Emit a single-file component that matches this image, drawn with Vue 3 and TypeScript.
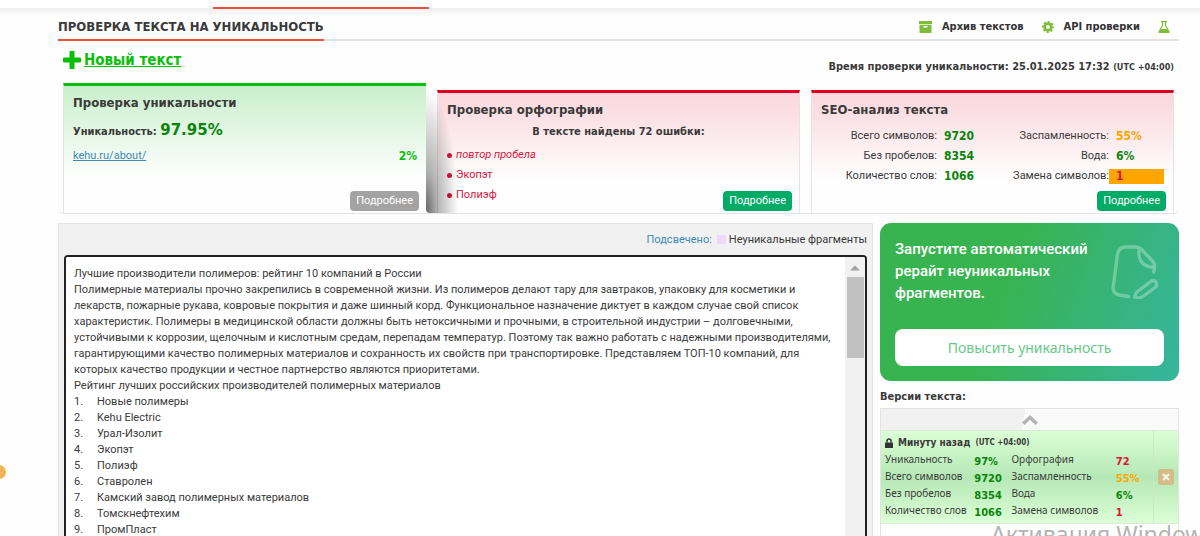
<script setup lang="ts">
import { ref } from 'vue'

interface Stat {
  label: string
  value: string
  tone: 'good' | 'warn' | 'bad'
  marked?: boolean
}

const seoLeft: Stat[] = [
  { label: 'Всего символов', value: '9720', tone: 'good' },
  { label: 'Без пробелов', value: '8354', tone: 'good' },
  { label: 'Количество слов', value: '1066', tone: 'good' },
]
const seoRight: Stat[] = [
  { label: 'Заспамленность', value: '55%', tone: 'warn' },
  { label: 'Вода', value: '6%', tone: 'good' },
  { label: 'Замена символов', value: '1', tone: 'bad', marked: true },
]

const versionRows: [Stat, Stat][] = [
  [
    { label: 'Уникальность', value: '97%', tone: 'good' },
    { label: 'Орфография', value: '72', tone: 'bad' },
  ],
  [seoLeft[0], seoRight[0]],
  [seoLeft[1], seoRight[1]],
  [seoLeft[2], seoRight[2]],
]

const intro = [
  'Лучшие производители полимеров: рейтинг 10 компаний в России',
  'Полимерные материалы прочно закрепились в современной жизни. Из полимеров делают тару для завтраков, упаковку для косметики и',
  'лекарств, пожарные рукава, ковровые покрытия и даже шинный корд. Функциональное назначение диктует в каждом случае свой список',
  'характеристик. Полимеры в медицинской области должны быть нетоксичными и прочными, в строительной индустрии – долговечными,',
  'устойчивыми к коррозии, щелочным и кислотным средам, перепадам температур. Поэтому так важно работать с надежными производителями,',
  'гарантирующими качество полимерных материалов и сохранность их свойств при транспортировке. Представляем ТОП-10 компаний, для',
  'которых качество продукции и честное партнерство являются приоритетами.',
  'Рейтинг лучших российских производителей полимерных материалов',
]
const companies = [
  'Новые полимеры',
  'Kehu Electric',
  'Урал-Изолит',
  'Экопэт',
  'Полиэф',
  'Ставролен',
  'Камский завод полимерных материалов',
  'Томскнефтехим',
  'ПромПласт',
]
const text = ref([...intro, ...companies.map((name, i) => `${i + 1}.\t${name}`)].join('\n'))
</script>

<template>
  <div class="page">
    <div class="top-strip"><span class="top-active"></span></div>

    <div class="container">
      <header class="title-row">
        <h1>ПРОВЕРКА ТЕКСТА НА УНИКАЛЬНОСТЬ</h1>
        <nav class="tools">
          <a href="#">
            <svg width="13" height="12" viewBox="0 0 13 12" fill="#7fbc3b">
              <path d="M0 0h13v3H0zM.5 3.800h12V12H.5zM4.500 5v1.500h4V5z" fill-rule="evenodd" />
            </svg>
            Архив текстов
          </a>
          <a href="#">
            <svg width="12" height="12" viewBox="0 0 12 12" fill="none">
              <circle cx="6" cy="6" r="3.300" stroke="#7fbc3b" stroke-width="2.800" />
              <circle cx="6" cy="6" r="5.100" stroke="#7fbc3b" stroke-width="1.800" stroke-dasharray="2.100 1.905" stroke-dashoffset="1" />
            </svg>
            API проверки
          </a>
          <a href="#" aria-label="Лаборатория">
            <svg width="12" height="12" viewBox="0 0 12 12" fill="none" stroke="#7fbc3b" stroke-width="1.200">
              <path d="M3 .6h6M4.500.6v4L1.100 10.400Q.7 11.400 1.700 11.400h8.600Q11.300 11.400 10.900 10.400L7.500 4.600v-4" />
              <path d="M2.700 8h6.600l1.700 3.400H1z" fill="#7fbc3b" stroke="none" />
            </svg>
          </a>
        </nav>
      </header>

      <div class="action-row">
        <a href="#" class="new-text">
          <svg width="18" height="18" viewBox="0 0 18 18" fill="#0abf0a">
            <path d="M7.500 0h3q1 0 1 1v5.500H17q1 0 1 1v3q0 1-1 1h-5.500V17q0 1-1 1h-3q-1 0-1-1v-5.500H1q-1 0-1-1v-3q0-1 1-1h5.500V1q0-1 1-1z" />
          </svg>
          <span>Новый текст</span>
        </a>
        <p class="check-time">Время проверки уникальности: 25.01.2025 17:32 <small>(UTC +04:00)</small></p>
      </div>

      <section class="cards">
        <article class="card card-green">
          <h2>Проверка уникальности</h2>
          <p class="unique">Уникальность: <strong>97.95%</strong></p>
          <p class="source"><a href="#">kehu.ru/about/</a><b>2%</b></p>
          <button type="button" class="more more-off">Подробнее</button>
        </article>

        <article class="card card-red">
          <h2>Проверка орфографии</h2>
          <p class="found">В тексте найдены 72 ошибки:</p>
          <ul>
            <li><em>повтор пробела</em></li>
            <li>Экопэт</li>
            <li>Полиэф</li>
          </ul>
          <button type="button" class="more">Подробнее</button>
        </article>

        <article class="card card-red">
          <h2>SEO-анализ текста</h2>
          <div class="seo">
            <dl v-for="(col, i) in [seoLeft, seoRight]" :key="i">
              <template v-for="s in col" :key="s.label">
                <dt>{{ s.label }}:</dt>
                <dd :class="[s.tone, { marked: s.marked }]">{{ s.value }}</dd>
              </template>
            </dl>
          </div>
          <button type="button" class="more">Подробнее</button>
        </article>
      </section>

      <div class="main">
        <section class="editor">
          <p class="legend"><span class="legend-title">Подсвечено:</span><i class="swatch"></i>Неуникальные фрагменты</p>
          <div class="editor-box">
            <textarea v-model="text" aria-label="Текст" spellcheck="false"></textarea>
            <div class="scrollbar">
              <svg width="10" height="6" viewBox="0 0 10 6"><path d="M0 5.500L5 .5l5 5z" fill="#a3a3a3" /></svg>
              <span class="thumb"></span>
            </div>
          </div>
        </section>

        <aside class="side">
          <section class="promo">
            <div class="promo-head">
              <p>Запустите автоматический рерайт неуникальных фрагментов.</p>
              <svg width="48" height="54" viewBox="0 0 48 54" fill="none" stroke="#fff" stroke-opacity=".3" stroke-width="3.400" stroke-linecap="round" stroke-linejoin="round">
                <path d="M17.500 51.500L8 50Q1.500 48.500 2.200 42L6.500 9Q8 2 15 2h10q3 0 5.500 2.500L41.500 16q2.500 2.500 2 6l-.7 5M28.500 4q-1.500 5 .5 10 2 7 13 8.500" />
                <path d="M26.500 46.500L40 36.500q3-2 5 .5 2 3-1 5.500L31 52q-3 1.500-7 .5 0-4 2.500-6z" />
              </svg>
            </div>
            <button type="button">Повысить уникальность</button>
          </section>

          <h3>Версии текста:</h3>
          <section class="versions">
            <button type="button" class="collapse" aria-label="Вверх">
              <svg width="16" height="10" viewBox="0 0 16 10" fill="none" stroke="#b4b4b4" stroke-width="3.600"><path d="M1.300 8.700L8 2.500l6.700 6.200" /></svg>
            </button>
            <div class="version">
              <div class="version-body">
                <p class="version-time">
                  <svg width="8" height="10" viewBox="0 0 8 10"><path d="M2 4.500V3a2 2 0 0 1 4 0v1.500" fill="none" stroke="#333" stroke-width="1.500" /><path d="M0 4.500h8V10H0z" fill="#333" /></svg>
                  Минуту назад <small>(UTC +04:00)</small>
                </p>
                <table>
                  <tbody>
                    <tr v-for="(row, i) in versionRows" :key="i">
                      <template v-for="s in row" :key="s.label">
                        <th scope="row">{{ s.label }}</th>
                        <td :class="s.tone">{{ s.value }}</td>
                      </template>
                    </tr>
                  </tbody>
                </table>
              </div>
              <div class="version-actions">
                <button type="button" aria-label="Удалить">
                  <svg width="8" height="8" viewBox="0 0 8 8" stroke="#f4f8e8" stroke-width="2.200"><path d="M1 1l6 6M7 1L1 7" /></svg>
                </button>
              </div>
            </div>
          </section>
        </aside>
      </div>
    </div>

    <span class="side-badge"></span>
    <div class="watermark">Активация Windows</div>
  </div>
</template>

<style>
body {
  margin: 0;
  background: #fefefe;
}
</style>

<style scoped>
* {
  box-sizing: border-box;
}
.page {
  position: relative;
  height: 100vh;
  overflow: hidden;
  background: #fefefe;
  color: #3a3a3a;
  font: 11px/16px Roboto, sans-serif;
}
h1, h2, h3, p, ul, dl, dd {
  margin: 0;
  padding: 0;
}
h1, h2, h3, b, strong, .tools, .check-time, .unique, .found, .new-text, .version-time, dd, td {
  font-family: "DejaVu Sans Condensed", "DejaVu Sans", sans-serif;
  font-weight: bold;
}
button {
  border: 0;
  padding: 0;
  font: inherit;
  cursor: pointer;
}
.top-strip {
  height: 16px;
  padding: 7px 0 0 213px;
  background: linear-gradient(#fff 8px, #efefef 8px, #fefefe);
}
.top-active {
  display: block;
  width: 216px;
  height: 2px;
  background: #e8513f;
}
.container {
  padding: 0 21px 0 58px;
}
.title-row {
  display: flex;
  justify-content: space-between;
  height: 25px;
  border-bottom: 2px solid #e3e3e3;
}
h1 {
  height: 25px;
  border-bottom: 2px solid #e8513f;
  font-size: 13px;
  line-height: 21px;
}
.tools {
  display: flex;
  gap: 18px;
  padding-right: 9px;
  line-height: 21px;
}
.tools a {
  display: flex;
  align-items: center;
  gap: 10px;
  height: 21px;
  color: #333;
  text-decoration: none;
}
.action-row {
  display: flex;
  justify-content: space-between;
  height: 42px;
  padding: 8px 5px 0;
}
.new-text {
  display: flex;
  align-items: center;
  gap: 3px;
  height: 22px;
  color: #0abf0a;
  font-size: 15px;
}
.check-time {
  padding-top: 10px;
}
small {
  font-size: 9px;
}
.cards {
  display: grid;
  grid-template-columns: repeat(3, minmax(0, 1fr));
  align-items: end;
  gap: 11px;
  padding: 0 5px;
  height: 131px;
  border-bottom: 1px solid #e3e3e3;
  border-radius: 0 0 5px 5px;
}
.card {
  position: relative;
  height: 123px;
  padding: 8px 9px;
  border: 1px solid #e3e3e3;
  border-width: 3px 1px 0;
}
.card-green {
  z-index: 1;
  height: 130px;
  border-top: 3px solid #0abf0a;
  border-right: 0;
  background: linear-gradient(#c9efcb, #fefefe 72%);
}
.card-red {
  border-top-color: #dc0020;
  background: linear-gradient(#fad6dc, #fefefe 72%);
}
.card-green::after {
  content: "";
  position: absolute;
  top: 3px;
  bottom: 0;
  left: 100%;
  width: 32px;
  border-radius: 0 0 0 4px;
  background: radial-gradient(ellipse 100% 100% at 0 100%, rgba(0, 0, 0, 0.6), rgba(0, 0, 0, 0.3) 35%, transparent);
}
h2 {
  font-size: 13px;
  line-height: 18px;
}
.unique {
  padding-top: 8px;
  line-height: 20px;
}
.unique strong {
  color: #0a850a;
  font-family: "DejaVu Sans", sans-serif;
  font-size: 15px;
}
.source {
  display: flex;
  justify-content: space-between;
  padding-top: 6px;
}
.source a {
  color: #3d8ab5;
}
.source b {
  color: #0abf0a;
  font-size: 12px;
}
.more {
  position: absolute;
  right: 7px;
  bottom: 2px;
  height: 20px;
  padding: 0 6px;
  border-radius: 4px;
  background: #00ab66;
  color: #fff;
  line-height: 20px;
}
.more-off {
  background: #a3a3a3;
}
.found {
  padding-top: 4px;
  text-align: center;
  line-height: 18px;
}
ul {
  padding-top: 4px;
  list-style: none;
  color: #dc1437;
  line-height: 20px;
}
li {
  display: flex;
  align-items: center;
  gap: 4px;
  height: 20px;
}
li::before {
  content: "";
  width: 5px;
  height: 5px;
  border-radius: 50%;
  background: #dc1437;
}
.seo {
  display: grid;
  grid-template-columns: 153px 1fr;
  padding-top: 7px;
}
.seo dl {
  display: grid;
  grid-auto-rows: 20px;
  align-items: center;
  text-align: right;
}
.seo dl:first-child {
  grid-template-columns: 1fr 37px;
}
.seo dl:last-child {
  grid-template-columns: 1fr 55px;
}
.seo dd {
  padding-left: 7px;
  text-align: left;
  font-size: 12px;
}
.good { color: #0a850a; }
.warn { color: #ffa500; }
.bad { color: #dc1437; }
.seo .marked {
  background: #ffa500;
  line-height: 15px;
}
.main {
  display: flex;
  align-items: flex-start;
  gap: 7px;
  padding-top: 9px;
}
.editor {
  flex: 1;
  min-width: 0;
  padding: 0 5px;
  border: 1px solid #e3e3e3;
  background: #f1f1f1;
}
.legend {
  display: flex;
  justify-content: flex-end;
  align-items: center;
  height: 31px;
}
.legend-title {
  color: #3d8ab5;
}
.swatch {
  width: 9px;
  height: 9px;
  margin: 0 3px 0 5px;
  background: #ecd9fb;
}
.editor-box {
  display: flex;
  height: 500px;
  border: 2px solid #222;
  border-radius: 4px;
  background: #fff;
  overflow: hidden;
}
textarea {
  flex: 1;
  min-width: 0;
  padding: 9px 8px;
  border: 0;
  outline: 0;
  resize: none;
  overflow: hidden;
  background: #fff;
  color: #3a3a3a;
  font: inherit;
  line-height: 16px;
  white-space: pre;
  tab-size: 23px;
}
.scrollbar {
  display: flex;
  flex-direction: column;
  align-items: center;
  width: 20px;
  padding-top: 8px;
  background: #f1f1f1;
}
.thumb {
  width: 17px;
  height: 81px;
  margin-top: 6px;
  background: #c1c1c1;
}
.side {
  width: 299px;
}
.promo {
  padding: 15px;
  border-radius: 11px;
  background: linear-gradient(110deg, #37b34f 40%, #36b59e);
}
.promo-head {
  display: flex;
  justify-content: space-between;
  align-items: flex-start;
  height: 91px;
}
.promo-head svg {
  flex: none;
  margin: 7px 5px 0 0;
}
.promo p {
  color: #fff;
  font: 500 15px/22px Roboto, sans-serif;
}
.promo button {
  width: 100%;
  height: 37px;
  border-radius: 8px;
  background: #fff;
  color: #67c986;
  font-family: "Noto Sans", sans-serif;
  font-size: 14px;
}
h3 {
  padding: 8px 0 3px;
  font-size: 11px;
  line-height: 16px;
}
.versions {
  height: 200px;
  border: 1px solid #e3e3e3;
}
.collapse {
  display: flex;
  justify-content: center;
  align-items: center;
  width: 100%;
  height: 21px;
  background: linear-gradient(100deg, #f1f1f1 48%, #fafafa 48%);
}
.version {
  display: flex;
  border: 1px solid #dcebd8;
  border-width: 1px 0;
  background: linear-gradient(#dcffd6, #b5e8b5 50%, #dcffd6);
}
.version-body {
  flex: 1;
  padding: 3px 0 4px 4px;
}
.version-time {
  display: flex;
  align-items: center;
  gap: 5px;
  height: 17px;
  font-size: 10px;
}
.version-time small {
  font-size: 8px;
}
table {
  width: 100%;
  border-collapse: collapse;
  table-layout: fixed;
}
th, td {
  width: 37px;
  height: 17px;
  padding: 0;
  text-align: left;
  vertical-align: top;
}
th {
  width: 89px;
  font-family: "Noto Sans", sans-serif;
  font-size: 10px;
  font-weight: normal;
  line-height: 17px;
}
th:nth-child(3) {
  width: 104px;
}
td {
  padding-top: 4px;
  font-size: 11px;
  line-height: 13px;
}
.version-actions {
  display: flex;
  align-items: center;
  justify-content: center;
  width: 25px;
  border-left: 1px solid #cde5c8;
}
.version-actions button {
  display: flex;
  align-items: center;
  justify-content: center;
  width: 16px;
  height: 16px;
  border-radius: 3px;
  background: #d5bb88;
}
.side-badge {
  position: absolute;
  left: -8px;
  top: 465px;
  width: 14px;
  height: 14px;
  border-radius: 50%;
  background: #eeb457;
}
.watermark {
  position: absolute;
  left: 991px;
  top: 520px;
  color: #b4b4b4;
  font-family: "Noto Sans", sans-serif;
  font-size: 23px;
  line-height: 28px;
  white-space: nowrap;
}
</style>
